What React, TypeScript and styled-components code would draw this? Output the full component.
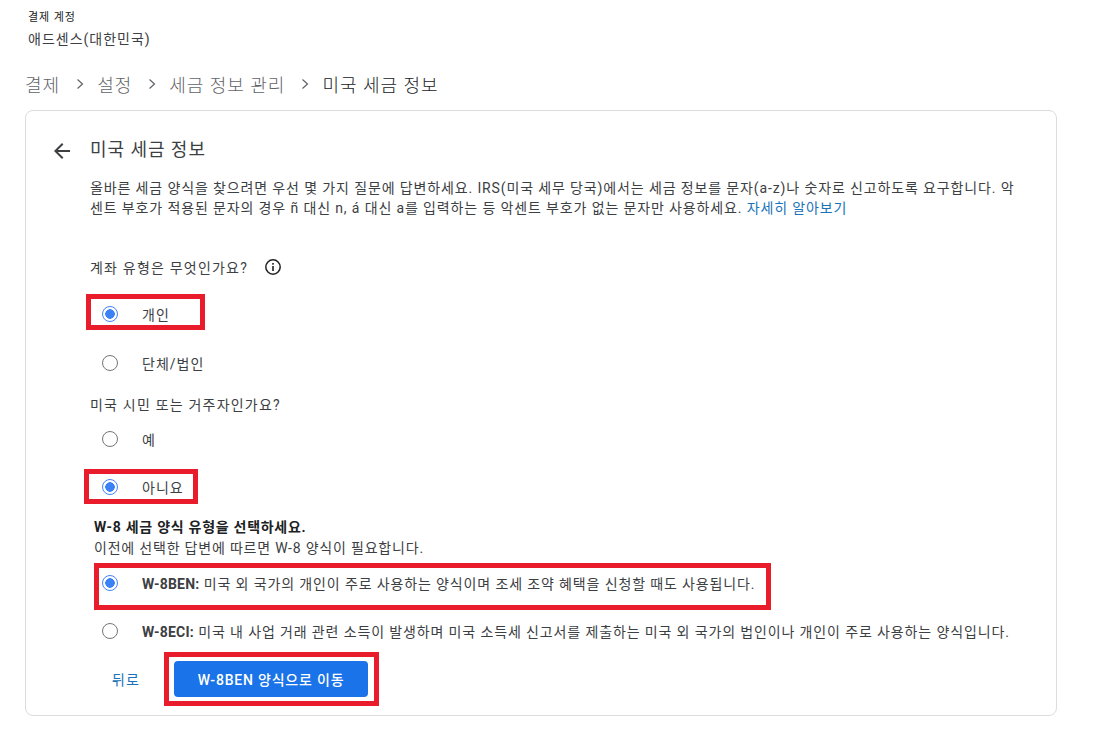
import React from "react";
import styled, { createGlobalStyle } from "styled-components";

const Global = createGlobalStyle`
  html, body { margin: 0; padding: 0; background: #fff; }
  body { font-family: Roboto, "Noto Sans CJK KR", "Liberation Sans", sans-serif; color: #3c4043; }
`;
const Page = styled.div`
  width: 1031px;
  height: 741px;
  padding: 0 42px 0 25px;
  overflow: hidden;
`;
const AccountLabel = styled.div`
  margin: 10px 0 0 3px;
  font-size: 11px;
  line-height: 16px;
  letter-spacing: 0.9px;
  color: #202124;
`;
const AccountName = styled.div`
  margin: 5px 0 0 3px;
  font-size: 14px;
  line-height: 16px;
  letter-spacing: 1px;
  color: #3c4043;
`;
const Breadcrumbs = styled.nav`
  display: flex;
  align-items: center;
  height: 30px;
  margin-top: 22px;
  font-size: 18px;
  letter-spacing: 1px;
`;
const Crumb = styled.span<{ $current?: boolean }>`
  color: ${(p) => (p.$current ? "#202124" : "#5f6368")};
  font-weight: 300;
`;
const Chevron = styled.svg`
  width: 8px;
  height: 12px;
  margin: 0 13px 0 16px;
  fill: none;
  stroke: #5f6368;
  stroke-width: 1.2;
`;
const Card = styled.section`
  box-sizing: border-box;
  width: 1032px;
  height: 606px;
  margin-top: 11px;
  padding: 22px 0 17px 24px;
  border: 1px solid #dadce0;
  border-radius: 8px;
`;
const Header = styled.header`
  display: flex;
  align-items: center;
  height: 32px;
`;
const BackIcon = styled.svg`
  width: 24px;
  height: 24px;
  margin: 4px 16px 0 0;
  fill: #3c4043;
`;
const Title = styled.h1`
  margin: 0 0 2px;
  font-size: 18px;
  font-weight: 400;
  letter-spacing: 0.95px;
  color: #3c4043;
`;
const Body = styled.div`
  padding-left: 40px;
`;
const Paragraph = styled.p`
  margin: 13px 0 0;
  font-size: 14px;
  line-height: 20px;
  letter-spacing: 0.87px;
  color: #3c4043;
`;
const LearnMore = styled.a`
  color: #1a73b8;
`;
const Question = styled.div<{ $mt: number }>`
  display: flex;
  align-items: center;
  height: 24px;
  margin-top: ${(p) => p.$mt}px;
  font-size: 14px;
  letter-spacing: 1.2px;
`;
const InfoIcon = styled.svg`
  width: 18px;
  height: 18px;
  margin-left: 16px;
`;
const Row = styled.label<{ $mt: number }>`
  position: relative;
  display: flex;
  align-items: center;
  height: 24px;
  margin-top: ${(p) => p.$mt}px;
  padding-left: 12px;
  font-size: 14px;
  letter-spacing: 1px;
`;
const Radio = styled.span<{ $on?: boolean }>`
  flex: none;
  box-sizing: border-box;
  width: 16px;
  height: 16px;
  margin-right: 24px;
  border-radius: 50%;
  border: 1.5px solid ${(p) => (p.$on ? "#4285f4" : "#757575")};
  background: ${(p) => (p.$on ? "radial-gradient(circle, #3b82f6 0 4.5px, #fff 5px)" : "#fff")};
`;
const Mark = styled.span<{ $l: number; $t: number; $w: number; $h: number }>`
  position: absolute;
  left: ${(p) => p.$l}px;
  top: ${(p) => p.$t}px;
  width: ${(p) => p.$w}px;
  height: ${(p) => p.$h}px;
  box-sizing: border-box;
  border: 5px solid #e81c2a;
  pointer-events: none;
`;
const LongText = styled.span`
  letter-spacing: 0.87px;
`;
const Strong = styled.strong`
  font-weight: 700;
  letter-spacing: 0.2px;
  color: #3c4043;
`;
const Heading = styled.div`
  margin-top: 18px;
  padding-left: 4px;
  font-size: 14px;
  line-height: 20px;
  font-weight: 700;
  letter-spacing: 0.72px;
  color: #202124;
`;
const SubHeading = styled.div`
  margin-top: 1px;
  padding-left: 4px;
  font-size: 14px;
  line-height: 20px;
  letter-spacing: 0.8px;
`;
const Actions = styled.div`
  display: flex;
  align-items: center;
  height: 36px;
  margin-top: 18px;
`;
const BackLink = styled.a`
  width: 84px;
  padding-left: 22px;
  box-sizing: border-box;
  font-size: 14px;
  letter-spacing: 1px;
  color: #1a73b8;
`;
const ButtonWrap = styled.div`
  position: relative;
`;
const Primary = styled.button`
  display: block;
  width: 194px;
  height: 36px;
  border: 0;
  border-radius: 4px;
  background: #1a73e8;
  color: #fff;
  font: 500 14px Roboto, "Noto Sans CJK KR", sans-serif;
  letter-spacing: 0.8px;
`;

export default function App() {
  const chev = (
    <Chevron viewBox="0 0 8 12">
      <path d="M1.5 1.5 6.5 6 1.5 10.5" />
    </Chevron>
  );
  return (
    <Page>
      <Global />
      <AccountLabel>결제 계정</AccountLabel>
      <AccountName>애드센스(대한민국)</AccountName>
      <Breadcrumbs>
        <Crumb>결제</Crumb>
        {chev}
        <Crumb>설정</Crumb>
        {chev}
        <Crumb>세금 정보 관리</Crumb>
        {chev}
        <Crumb $current>미국 세금 정보</Crumb>
      </Breadcrumbs>
      <Card>
        <Header>
          <BackIcon viewBox="0 0 24 24">
            <path d="M20 11H7.83l5.59-5.59L12 4l-8 8 8 8 1.41-1.41L7.83 13H20v-2z" />
          </BackIcon>
          <Title>미국 세금 정보</Title>
        </Header>
        <Body>
          <Paragraph>
            올바른 세금 양식을 찾으려면 우선 몇 가지 질문에 답변하세요. IRS(미국 세무 당국)에서는 세금 정보를 문자(a-z)나 숫자로 신고하도록 요구합니다. 악
            <br />
            센트 부호가 적용된 문자의 경우 ñ 대신 n, á 대신 a를 입력하는 등 악센트 부호가 없는 문자만 사용하세요.{" "}
            <LearnMore>자세히 알아보기</LearnMore>
          </Paragraph>
          <Question $mt={37}>
            계좌 유형은 무엇인가요?
            <InfoIcon viewBox="0 0 18 18">
              <circle cx="9" cy="9" r="7.2" fill="none" stroke="#202124" strokeWidth="1.5" />
              <rect x="8.2" y="8" width="1.6" height="5" fill="#202124" />
              <rect x="8.2" y="5" width="1.6" height="1.7" fill="#202124" />
            </InfoIcon>
          </Question>
          <Row $mt={23}>
            <Radio $on />
            개인
            <Mark $l={-4} $t={-8} $w={119} $h={36} />
          </Row>
          <Row $mt={25}>
            <Radio />
            단체/법인
          </Row>
          <Question $mt={17}>미국 시민 또는 거주자인가요?</Question>
          <Row $mt={11}>
            <Radio />
            예
          </Row>
          <Row $mt={24}>
            <Radio $on />
            아니요
            <Mark $l={-6} $t={-6} $w={114} $h={35} />
          </Row>
          <Heading>W-8 세금 양식 유형을 선택하세요.</Heading>
          <SubHeading>이전에 선택한 답변에 따르면 W-8 양식이 필요합니다.</SubHeading>
          <Row $mt={13}>
            <Radio $on />
            <LongText>
              <Strong>W-8BEN:</Strong> 미국 외 국가의 개인이 주로 사용하는 양식이며 조세 조약 혜택을 신청할 때도 사용됩니다.
            </LongText>
            <Mark $l={4} $t={-8} $w={677} $h={47} />
          </Row>
          <Row $mt={24}>
            <Radio />
            <LongText>
              <Strong>W-8ECI:</Strong> 미국 내 사업 거래 관련 소득이 발생하며 미국 소득세 신고서를 제출하는 미국 외 국가의 법인이나 개인이 주로 사용하는 양식입니다.
            </LongText>
          </Row>
          <Actions>
            <BackLink>뒤로</BackLink>
            <ButtonWrap>
              <Primary>W-8BEN 양식으로 이동</Primary>
              <Mark $l={-10} $t={-9} $w={215} $h={54} />
            </ButtonWrap>
          </Actions>
        </Body>
      </Card>
    </Page>
  );
}
